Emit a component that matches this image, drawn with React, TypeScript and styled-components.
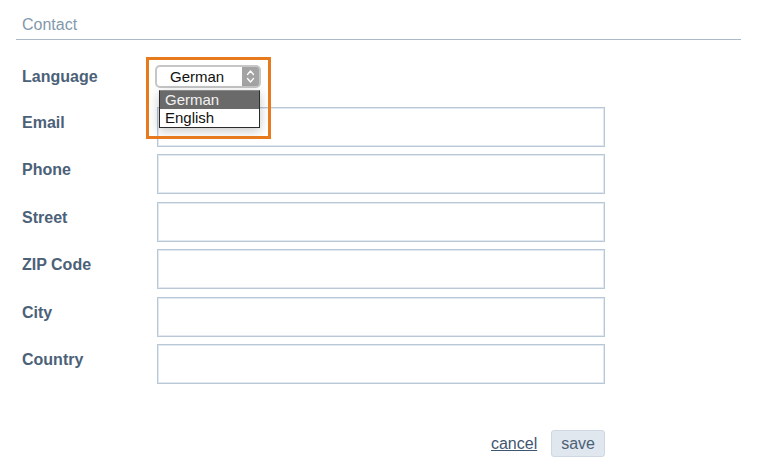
import React from 'react'
import styled, { createGlobalStyle } from 'styled-components'

const GlobalStyle = createGlobalStyle`
  html, body {
    margin: 0;
    padding: 0;
    background: #ffffff;
  }
  body {
    font-family: "Liberation Sans", Arial, Helvetica, sans-serif;
  }
`

const fields = ['Email', 'Phone', 'Street', 'ZIP Code', 'City', 'Country']

export default function App() {
  return (
    <>
      <GlobalStyle />
      <Page>
        <Title>Contact</Title>
        <Form>
          <SelectRow>
            <Label>Language</Label>
            <SelectWrap>
              <SelectFrame>
                <SelectBody>German</SelectBody>
                <SelectArrow>
                  <svg width="9" height="15" viewBox="0 0 9 15">
                    <path
                      d="M1.5 5.5 L4.5 2 L7.5 5.5 M1.5 9.5 L4.5 13 L7.5 9.5"
                      fill="none"
                      stroke="#ffffff"
                      strokeWidth="1.3"
                      strokeLinecap="round"
                      strokeLinejoin="round"
                    />
                  </svg>
                </SelectArrow>
              </SelectFrame>
              <Options>
                <Option $active>German</Option>
                <Option>English</Option>
              </Options>
              <Highlight />
            </SelectWrap>
          </SelectRow>
          {fields.map((f) => (
            <Row key={f}>
              <Label>{f}</Label>
              <Field />
            </Row>
          ))}
          <Footer>
            <CancelLink href="#">cancel</CancelLink>
            <SaveButton type="button">save</SaveButton>
          </Footer>
        </Form>
      </Page>
    </>
  )
}

const Page = styled.div`
  padding: 16px 27px 0 16px;
`
const Title = styled.div`
  font-size: 16px;
  line-height: 18px;
  color: #8299ad;
  padding: 0 0 5px 6px;
  border-bottom: 1px solid #a9b9c8;
`
const Form = styled.form`
  margin-top: 21px;
  width: 589px;
  display: flex;
  flex-direction: column;
  gap: 7.5px;
`
const Row = styled.div`
  display: grid;
  grid-template-columns: 141px 448px;
  align-items: start;
`
const SelectRow = styled(Row)`
  height: 38px;
  position: relative;
  z-index: 2;
`
const Label = styled.label`
  padding: 7px 0 0 6px;
  font-size: 16px;
  line-height: 18px;
  font-weight: bold;
  color: #4b6178;
`
const Field = styled.input`
  box-sizing: border-box;
  height: 40px;
  width: 448px;
  margin: 0;
  border: 1px solid #b9c8d6;
  box-shadow: inset 0 0 0 1px #e2e8ef;
  background: #ffffff;
  outline: none;
`
const SelectWrap = styled.div`
  position: relative;
  margin: 4px 0 0 -2px;
  width: 106px;
  height: 23px;
`
const SelectFrame = styled.div`
  box-sizing: border-box;
  display: flex;
  width: 106px;
  height: 23px;
  padding: 2px;
  border-radius: 5px;
  background: #c6c6c6;
`
const SelectBody = styled.div`
  flex: 1;
  background: #ffffff;
  border-radius: 3px 0 0 3px;
  padding-left: 13px;
  font-size: 15px;
  line-height: 19px;
  color: #111111;
`
const SelectArrow = styled.div`
  width: 17px;
  display: flex;
  align-items: center;
  justify-content: center;
  background: #a3a3a3;
  border-radius: 0 3px 3px 0;
`
const Options = styled.div`
  position: absolute;
  top: 25px;
  left: 4px;
  width: 101px;
  box-sizing: border-box;
  border: 1px solid #2b2b2b;
  border-top-color: #8a8a8a;
  background: #ffffff;
  box-shadow: 0 3px 10px rgba(0, 0, 0, 0.22);
`
const Option = styled.div<{ $active?: boolean }>`
  height: 18px;
  padding-left: 5px;
  font-size: 15px;
  line-height: 18px;
  color: ${(p) => (p.$active ? '#f2f2f2' : '#111111')};
  background: ${(p) => (p.$active ? '#6a6a6a' : '#ffffff')};
`
const Highlight = styled.div`
  position: absolute;
  top: -8px;
  left: -9px;
  width: 125px;
  height: 82px;
  box-sizing: border-box;
  border: 3.5px solid #e67a1c;
  pointer-events: none;
`
const Footer = styled.div`
  margin-top: 38.5px;
  display: flex;
  justify-content: flex-end;
  align-items: center;
  gap: 14px;
`
const CancelLink = styled.a`
  font-size: 16px;
  color: #3f5670;
  text-decoration: underline;
`
const SaveButton = styled.button`
  height: 27px;
  padding: 0 9px;
  border: 1px solid #cfd8e1;
  border-radius: 3px;
  background: #e1e7ee;
  font-family: "Liberation Sans", Arial, sans-serif;
  font-size: 16px;
  color: #4b6178;
`
